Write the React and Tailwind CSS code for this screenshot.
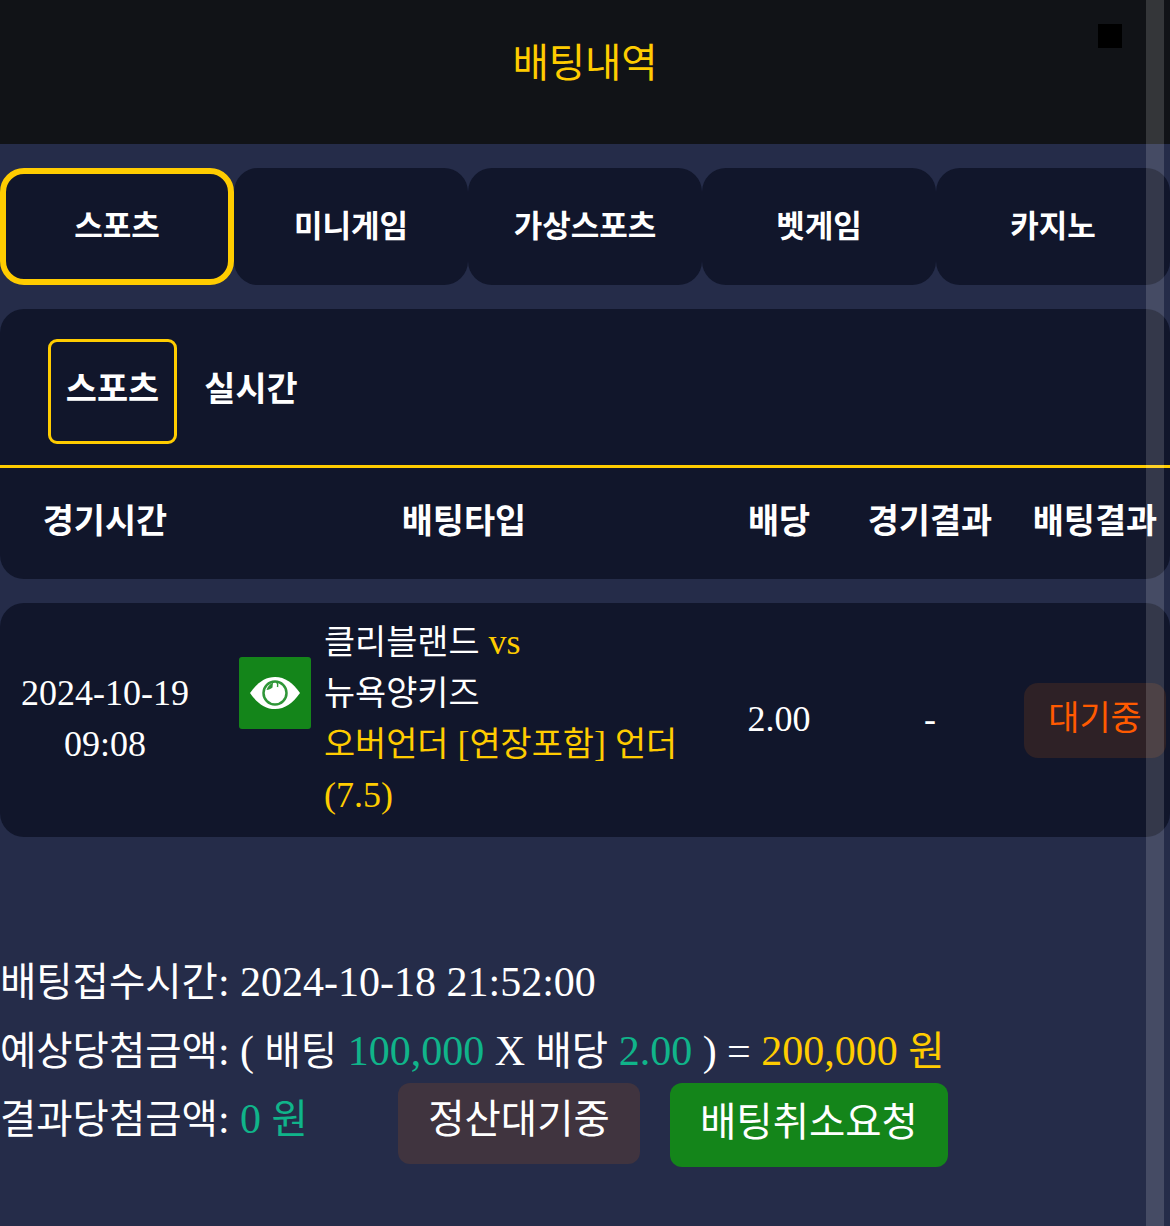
import React from 'react';

const K = ({ children }) => <span className="text-[0.94em]">{children}</span>;

const mainTabs = ['스포츠', '미니게임', '가상스포츠', '벳게임', '카지노'];

const EyeIcon = () => (
  <div className="w-[72px] h-[72px] rounded-[3px] bg-[#14851a] flex items-center justify-center shrink-0">
    <svg width="52" height="34" viewBox="0 0 52 34">
      <path d="M1 17C8 7 16 1 26 1s18 6 25 16c-7 10-15 16-25 16S8 27 1 17z" fill="#fff" />
      <circle cx="26" cy="17" r="11.5" fill="none" stroke="#2f9638" strokeWidth="2.5" />
      <path d="M17.5 14c1-3 3-6 6.500-7.500l-.5 5c-2 1.500-3.500 2.500-6 2.500z" fill="#2f9638" />
      <path d="M28 6.500c1 1.500 1 3 .5 4.500" fill="none" stroke="#2f9638" strokeWidth="1.500" />
    </svg>
  </div>
);

export default function App() {
  return (
    <div className="relative w-[1170px] h-[1226px] overflow-hidden bg-[#252c49] text-white font-['Liberation_Serif','Noto_Sans_CJK_KR',serif]">
      <header className="relative h-[144px] pb-[24px] bg-[#111317] flex items-center justify-center text-[#ffcc00] text-[42px] font-['Noto_Sans_CJK_KR',sans-serif]">
        <K>배팅내역</K>
        <div className="absolute left-[1098px] top-[24px] w-[24px] h-[24px] bg-black" />
      </header>

      <nav className="flex pt-[24px] font-['Noto_Sans_CJK_KR',sans-serif] font-bold text-[33px]">
        {mainTabs.map((tab, i) => (
          <div
            key={tab}
            className={`w-[234px] h-[117px] pb-[4px] rounded-[24px] bg-[#11162b] flex items-center justify-center ${i === 0 ? 'border-[6px] border-[#ffcc00]' : ''}`}
          >
            <K>{tab}</K>
          </div>
        ))}
      </nav>

      <section className="mt-[24px] h-[270px] rounded-[24px] bg-[#11162b] font-['Noto_Sans_CJK_KR',sans-serif] font-bold text-[36px]">
        <div className="h-[159px] border-b-[3px] border-[#ffcc00] pl-[48px] pt-[30px] flex items-start">
          <div className="w-[129px] h-[105px] pb-[8px] rounded-[9px] border-[3px] border-[#ffcc00] flex items-center justify-center">
            <K>스포츠</K>
          </div>
          <div className="w-[148px] h-[105px] pb-[8px] flex items-center justify-center">
            <K>실시간</K>
          </div>
        </div>
        <div className="flex h-[111px] pb-[12px] items-center text-center">
          <div className="w-[210px]"><K>경기시간</K></div>
          <div className="w-[508px]"><K>배팅타입</K></div>
          <div className="w-[122px]"><K>배당</K></div>
          <div className="w-[180px]"><K>경기결과</K></div>
          <div className="w-[150px]"><K>배팅결과</K></div>
        </div>
      </section>

      <section className="mt-[24px] h-[234px] pb-[2px] rounded-[24px] bg-[#11162b] text-[36px] flex items-center">
        <div className="w-[210px] text-center leading-[51px]">
          <div>2024-10-19</div>
          <div>09:08</div>
        </div>
        <div className="w-[508px] flex items-start">
          <div className="ml-[29px] mt-[40px]"><EyeIcon /></div>
          <div className="ml-[13px] w-[370px] leading-[51px]">
            <div><K>클리블랜드</K> <span className="text-[#ffcc00]">vs</span></div>
            <div><K>뉴욕양키즈</K></div>
            <div className="text-[#ffcc00]"><K>오버언더</K> [<K>연장포함</K>] <K>언더</K> (7.5)</div>
          </div>
        </div>
        <div className="w-[122px] text-center">2.00</div>
        <div className="w-[180px] text-center">-</div>
        <div className="w-[150px] flex">
          <div className="ml-[4px] mt-[3px] w-[142px] h-[75px] pb-[3px] rounded-[14px] bg-[#2e2126] text-[#ff5a00] flex items-center justify-center">
            <K>대기중</K>
          </div>
        </div>
      </section>

      <section className="pt-[111px] text-[42px] leading-[68px]">
        <div><K>배팅접수시간</K>: 2024-10-18 21:52:00</div>
        <div>
          <K>예상당첨금액</K>: ( <K>배팅</K> <span className="text-[#10b48a]">100,000</span> X <K>배당</K> <span className="text-[#10b48a]">2.00</span> ) = <span className="text-[#ffcc00]">200,000 <K>원</K></span>
        </div>
        <div className="flex items-start -mt-[1px]">
          <div className="w-[398px]"><K>결과당첨금액</K>: <span className="text-[#10b48a]">0 <K>원</K></span></div>
          <div className="w-[242px] h-[81px] rounded-[12px] bg-[#40343f] text-center -mt-[2px] pt-[2px]"><K>정산대기중</K></div>
          <div className="ml-[30px] w-[278px] h-[84px] pb-[4px] rounded-[12px] bg-[#14851a] flex items-center justify-center -mt-[2px]"><K>배팅취소요청</K></div>
        </div>
      </section>

      <div className="absolute left-[1146px] top-0 w-[18px] h-[1226px] bg-white/15" />
    </div>
  );
}
